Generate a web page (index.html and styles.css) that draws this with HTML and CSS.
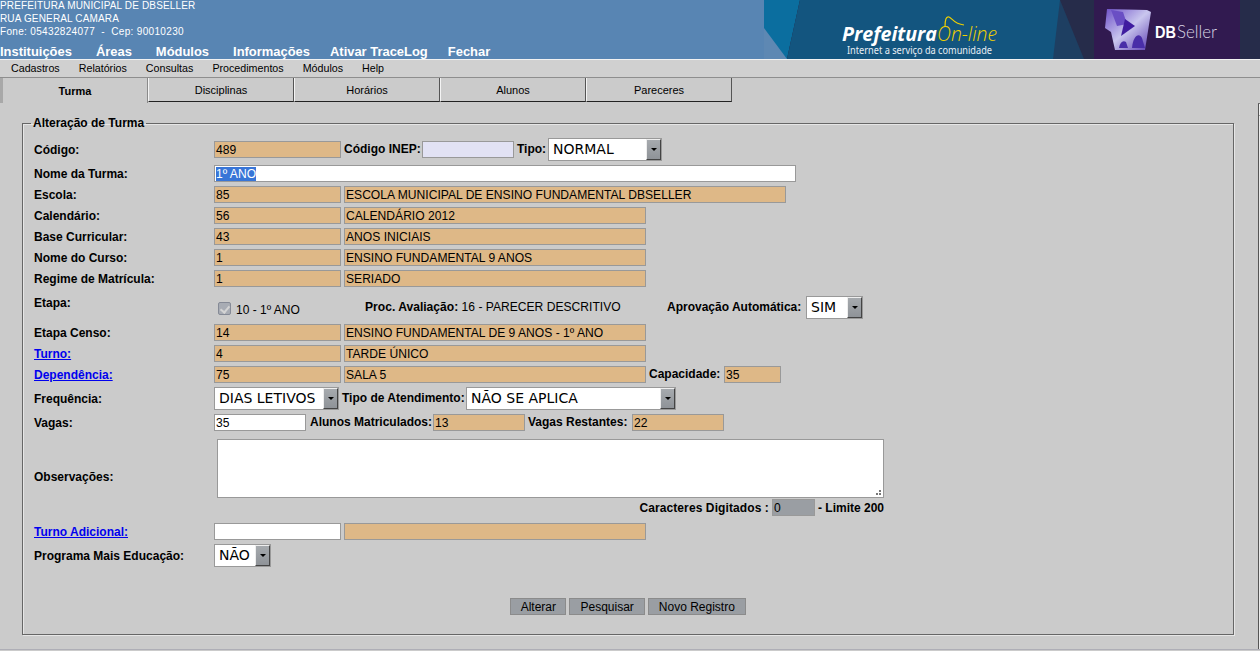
FILE: index.html
```html
<!DOCTYPE html>
<html lang="pt-BR">
<head>
    <meta charset="UTF-8">
    <title>Alteração de Turma</title>
    <link rel="stylesheet" href="styles.css">
</head>
<body>
    <header class="topo">
        <div class="topo-esq">
            <div class="inst">PREFEITURA MUNICIPAL DE DBSELLER</div>
            <div class="inst">RUA GENERAL CAMARA</div>
            <div class="inst fone">Fone: 05432824077 &nbsp;-&nbsp; Cep: 90010230</div>
            <nav class="nav-topo">
                <a>Instituições</a>
                <a>Áreas</a>
                <a>Módulos</a>
                <a class="curto">Informações</a>
                <a class="curto">Ativar TraceLog</a>
                <a>Fechar</a>
            </nav>
        </div>
        <svg class="banner" width="496" height="59" viewBox="0 0 496 59">
            <defs>
                <linearGradient id="cubo" x1="0" y1="0" x2="1" y2="1">
                    <stop offset="0" stop-color="#6d4fc8"/>
                    <stop offset="0.5" stop-color="#c9c6ee"/>
                    <stop offset="1" stop-color="#5a3bb0"/>
                </linearGradient>
                <filter id="borrao"><feGaussianBlur stdDeviation="0.7"/></filter>
            </defs>
            <rect width="496" height="59" fill="#262c4a"/>
            <polygon points="0,0 36,0 23,59 0,59" fill="#0b6e9f"/>
            <polygon points="0,28 23,59 0,59" fill="#5e88b3"/>
            <polygon points="36,0 296,0 320,59 23,59" fill="#1e3f62"/>
            <polygon points="36,0 296,0 289,59 23,59" fill="#13557f"/>
            <rect x="330" width="146" height="59" fill="#311a50"/>
            <text x="78" y="41" class="lg-pref" textLength="95" lengthAdjust="spacingAndGlyphs">Prefeitura</text>
            <text x="173" y="41" class="lg-on" textLength="60" lengthAdjust="spacingAndGlyphs">On-line</text>
            <path d="M181 27C181 20 182 16 185 17C188 18 190 24 200 25" fill="none" stroke="#f0d000" stroke-width="1.2"/>
            <text x="83" y="54" class="lg-sub" textLength="145" lengthAdjust="spacingAndGlyphs">Internet a serviço da comunidade</text>
            <g transform="translate(235 0)" filter="url(#borrao)">
                <polygon points="108,9 148,10 152,12 146,50 116,50 112,32 106,28" fill="url(#cubo)"/>
                <polygon points="112,10 124,12 128,24 118,26" fill="#6a4fc4"/>
                <polygon points="126,19 136,26 122,36" fill="#3f1fa0"/>
                <path d="M133 48C134 36 140 32 143 38L146 48Z" fill="#4a2fa8"/>
                <path d="M120 48C121 42 124 40 127 42L129 48Z" fill="#4a2fa8"/>
            </g>
            <text x="391" y="38" class="lg-db" textLength="21" lengthAdjust="spacingAndGlyphs">DB</text>
            <text x="413" y="38" class="lg-seller" textLength="40" lengthAdjust="spacingAndGlyphs">Seller</text>
        </svg>
    </header>

    <div class="menu">
        <a>Cadastros</a>
        <a>Relatórios</a>
        <a>Consultas</a>
        <a>Procedimentos</a>
        <a>Módulos</a>
        <a>Help</a>
    </div>

    <div class="abas">
        <div class="aba ativa">Turma</div>
        <div class="aba">Disciplinas</div>
        <div class="aba">Horários</div>
        <div class="aba">Alunos</div>
        <div class="aba">Pareceres</div>
    </div>

    <main class="conteudo">
        <fieldset class="quadro">
            <legend>Alteração de Turma</legend>

            <div class="linha alta">
                <label>Código:</label>
                <span class="campo c127">489</span>
                <b class="m3 rot-inep">Código INEP:</b>
                <span class="campo inep m3"></span>
                <b class="m3 rot-tipo">Tipo:</b>
                <span class="sel s-tipo m3">NORMAL<i class="seta"></i></span>
            </div>
            <div class="linha">
                <label>Nome da Turma:</label>
                <span class="campo branco nome"><span class="selecao">1º ANO</span></span>
            </div>
            <div class="linha">
                <label>Escola:</label>
                <span class="campo c127">85</span>
                <span class="campo longo m3">ESCOLA MUNICIPAL DE ENSINO FUNDAMENTAL DBSELLER</span>
            </div>
            <div class="linha">
                <label>Calendário:</label>
                <span class="campo c127">56</span>
                <span class="campo c302 m3">CALENDÁRIO 2012</span>
            </div>
            <div class="linha">
                <label>Base Curricular:</label>
                <span class="campo c127">43</span>
                <span class="campo c302 m3">ANOS INICIAIS</span>
            </div>
            <div class="linha">
                <label>Nome do Curso:</label>
                <span class="campo c127">1</span>
                <span class="campo c302 m3">ENSINO FUNDAMENTAL 9 ANOS</span>
            </div>
            <div class="linha">
                <label>Regime de Matrícula:</label>
                <span class="campo c127">1</span>
                <span class="campo c302 m3">SERIADO</span>
            </div>
            <div class="linha etapa">
                <label class="topo-label">Etapa:</label>
                <input class="check" type="checkbox" checked disabled>
                <span class="check-txt">10 - 1º ANO</span>
                <span class="proc"><b>Proc. Avaliação:</b> 16 - PARECER DESCRITIVO</span>
                <b class="rot-aprov">Aprovação Automática:</b>
                <span class="sel s-sim m3">SIM<i class="seta"></i></span>
            </div>
            <div class="linha">
                <label>Etapa Censo:</label>
                <span class="campo c127">14</span>
                <span class="campo c302 m3">ENSINO FUNDAMENTAL DE 9 ANOS - 1º ANO</span>
            </div>
            <div class="linha">
                <label><a href="#">Turno:</a></label>
                <span class="campo c127">4</span>
                <span class="campo c302 m3">TARDE ÚNICO</span>
            </div>
            <div class="linha">
                <label><a href="#">Dependência:</a></label>
                <span class="campo c127">75</span>
                <span class="campo c302 m3">SALA 5</span>
                <b class="m3 rot-cap">Capacidade:</b>
                <span class="campo cap m3">35</span>
            </div>
            <div class="linha alta">
                <label>Frequência:</label>
                <span class="sel s-freq">DIAS LETIVOS<i class="seta"></i></span>
                <b class="m3 rot-atend">Tipo de Atendimento:</b>
                <span class="sel s-atend m3">NÃO SE APLICA<i class="seta"></i></span>
            </div>
            <div class="linha vagas">
                <label>Vagas:</label>
                <span class="campo branco c92">35</span>
                <b class="m4 rot-alunos">Alunos Matriculados:</b>
                <span class="campo c92 m3">13</span>
                <b class="m3 rot-vagas">Vagas Restantes:</b>
                <span class="campo c92 m3">22</span>
            </div>
            <div class="linha obs">
                <label>Observações:</label>
                <textarea class="texto"></textarea>
            </div>
            <div class="linha contador">
                <b class="rot-carac">Caracteres Digitados :</b>
                <span class="campo cinza c43">0</span>
                <b>- Limite 200</b>
            </div>
            <div class="linha adicional">
                <label><a href="#">Turno Adicional:</a></label>
                <span class="campo branco c127"></span>
                <span class="campo c302 m3"></span>
            </div>
            <div class="linha alta">
                <label>Programa Mais Educação:</label>
                <span class="sel s-nao">NÃO<i class="seta"></i></span>
            </div>
            <div class="botoes">
                <button class="b-alterar">Alterar</button>
                <button>Pesquisar</button>
                <button>Novo Registro</button>
            </div>
        </fieldset>
        <div class="lateral"><div class="lateral-topo"></div></div>
    </main>
</body>
</html>
```

FILE: styles.css
```css
html, body {
    margin: 0;
    height: 651px;
    overflow: hidden;
}
body {
    background: #cbcbcb;
    font-family: "Liberation Sans", Arial, sans-serif;
    font-size: 12px;
    color: #000;
}
.topo {
    display: flex;
    justify-content: space-between;
    height: 59px;
    background: #5885b3;
    border-bottom: 1px solid #f2f2f2;
}
.topo-esq {
    color: #fff;
}
.inst {
    height: 13px;
    line-height: 12px;
    font-size: 10px;
    letter-spacing: 0.15px;
}
.inst.fone {
    letter-spacing: 0.33px;
}
.nav-topo {
    display: flex;
    gap: 24px;
    margin-top: 5px;
    font-size: 12.95px;
    font-weight: bold;
    line-height: 15px;
}
.nav-topo .curto {
    margin-right: -4px;
}
.banner {
    display: block;
}
.lg-pref {
    font: italic bold 19px "Open Sans", sans-serif;
    fill: #fff;
}
.lg-on {
    font: italic 300 20px "Open Sans", sans-serif;
    fill: #f0d000;
}
.lg-sub {
    font: 10px "Noto Sans", sans-serif;
    fill: #e8eef4;
}
.lg-db {
    font: bold 17px "Liberation Sans", sans-serif;
    fill: #fff;
}
.lg-seller {
    font: 300 17px "Lato", sans-serif;
    fill: #d8d4e4;
}
.menu {
    display: flex;
    gap: 19px;
    height: 17px;
    padding-left: 11px;
    font-size: 10.7px;
    line-height: 17px;
    background: #d0d0d0;
    border-bottom: 1px solid #8e8e8e;
}
.abas {
    display: flex;
    height: 25px;
    font-size: 11px;
}
.aba {
    width: 144px;
    height: 23px;
    line-height: 24px;
    text-align: center;
    background: #cbcbcb;
    border-left: 1px solid #f4f4f4;
    border-right: 1px solid #555;
    border-bottom: 1px solid #222;
}
.aba.ativa {
    width: 144px;
    height: 25px;
    line-height: 26px;
    border: 0;
    border-left: 3px solid #a8a8a8;
    border-right: 1px solid #8a8a8a;
    font-weight: bold;
}
.conteudo {
    display: flex;
    align-items: flex-start;
    gap: 23px;
    height: 546px;
    padding-left: 22px;
    border-bottom: 1px solid #aeaeb6;
}
.quadro {
    box-sizing: border-box;
    flex: none;
    width: 1210px;
    height: 518px;
    margin: 14px 0 0;
    padding: 8px 0 0 11px;
    border: 1px solid #666;
    box-shadow: inset 1px 1px 0 #e6e6e6, 1px 1px 0 #e6e6e6;
}
.quadro legend {
    margin-left: -3px;
    padding: 0 2px;
    font-weight: bold;
    line-height: 13px;
}
.lateral {
    flex: none;
    box-sizing: border-box;
    width: 20px;
    height: 546px;
    margin-left: 1px;
    background: #ececec;
    border-left: 1px solid #555;
    border-top: 1px solid #777;
}
.lateral-topo {
    height: 11px;
    background: #cfcfcf;
    border-left: 1px solid #f0f0f0;
    border-bottom: 1px solid #555;
}
.linha {
    display: flex;
    align-items: center;
    height: 17px;
    margin-bottom: 4px;
    white-space: nowrap;
}
.linha.alta {
    height: 23px;
}
.linha b {
    line-height: 15px;
}
.linha label {
    flex: none;
    width: 180px;
    font-weight: bold;
}
.linha a {
    color: #0000ee;
}
.rot-inep { width: 75px; }
.rot-tipo { width: 28px; }
.rot-atend { width: 121px; }
.rot-alunos { width: 120px; }
.rot-aprov { width: 136px; }
.rot-cap { width: 72px; }
.rot-vagas { width: 101px; }
.rot-carac { letter-spacing: 0.1px; }
.campo {
    box-sizing: border-box;
    flex: none;
    height: 17px;
    padding-left: 1px;
    font-size: 12.1px;
    line-height: 16px;
    background: #deb887;
    border: 1px solid #999;
    overflow: hidden;
}
.c127 { width: 127px; }
.c302 { width: 302px; }
.c92 { width: 92px; }
.c43 { width: 43px; }
.m3 { margin-left: 3px; }
.m4 { margin-left: 4px; }
.longo { width: 442px; }
.cap { width: 57px; }
.inep {
    width: 92px;
    background: #e2e2f4;
}
.nome {
    width: 582px;
}
.branco {
    background: #fff;
}
.cinza {
    background: #9a9ea3;
}
.selecao {
    background: #3875d7;
    color: #fff;
}
.sel {
    box-sizing: border-box;
    position: relative;
    flex: none;
    height: 23px;
    padding-left: 4px;
    line-height: 21px;
    font-family: "DejaVu Sans", sans-serif;
    font-size: 14px;
    background: #fff;
    border: 1px solid #999;
}
.seta {
    position: absolute;
    top: 0;
    right: 0;
    bottom: 0;
    width: 15px;
    background: linear-gradient(#a6aaae, #8f9398);
    border: 1px solid;
    border-color: #eee #444 #444 #eee;
    box-sizing: border-box;
}
.seta::after {
    content: "";
    position: absolute;
    top: 8px;
    left: 4px;
    border: 3px solid transparent;
    border-top-color: #000;
}
.s-tipo { width: 114px; }
.s-sim { width: 57px; }
.s-freq { width: 125px; }
.s-atend { width: 210px; }
.s-nao { width: 57px; }
.etapa {
    height: 23px;
    margin-top: 9px;
    margin-bottom: 5px;
}
.etapa .topo-label {
    align-self: flex-start;
}
.check {
    appearance: none;
    position: relative;
    width: 13px;
    height: 13px;
    margin: 2px 5px 0 4px;
    background: #a8acb4;
    border: 1px solid #858a96;
    border-radius: 2px;
}
.check::after {
    content: "";
    position: absolute;
    top: 1px;
    left: 3px;
    width: 4px;
    height: 7px;
    border: solid #d4d4d4;
    border-width: 0 2px 2px 0;
    transform: rotate(40deg);
}
.check-txt {
    width: 129px;
    padding-top: 4px;
}
.proc {
    width: 302px;
    font-size: 12.1px;
}
.vagas {
    margin-top: 1px;
    margin-bottom: 8px;
}
.obs {
    height: 59px;
    margin-bottom: 1px;
}
.obs label {
    padding-top: 16px;
}
.texto {
    box-sizing: border-box;
    width: 667px;
    height: 59px;
    margin: 0 0 0 3px;
    resize: none;
    background-color: #fff;
    background-image: radial-gradient(circle, #777 1px, transparent 1px), radial-gradient(circle, #777 1px, transparent 1px), radial-gradient(circle, #777 1px, transparent 1px);
    background-size: 2px 2px;
    background-repeat: no-repeat;
    background-position: right 5px bottom 2px, right 2px bottom 2px, right 2px bottom 5px;
    border: 1px solid #999;
}
.contador {
    justify-content: flex-end;
    gap: 3px;
    width: 850px;
    margin-bottom: 7px;
}
.contador b {
    padding-top: 2px;
}
.botoes {
    display: flex;
    justify-content: center;
    gap: 3px;
    width: 1210px;
    margin: 31px 0 0 -11px;
}
.botoes button {
    height: 17px;
    padding: 0 10px;
    font: 12px "Liberation Sans", Arial, sans-serif;
    color: #000;
    background: #9a9ea3;
    border: 1px solid #8b8b8b;
}
.botoes .b-alterar {
    padding: 0 9.5px;
}
```
